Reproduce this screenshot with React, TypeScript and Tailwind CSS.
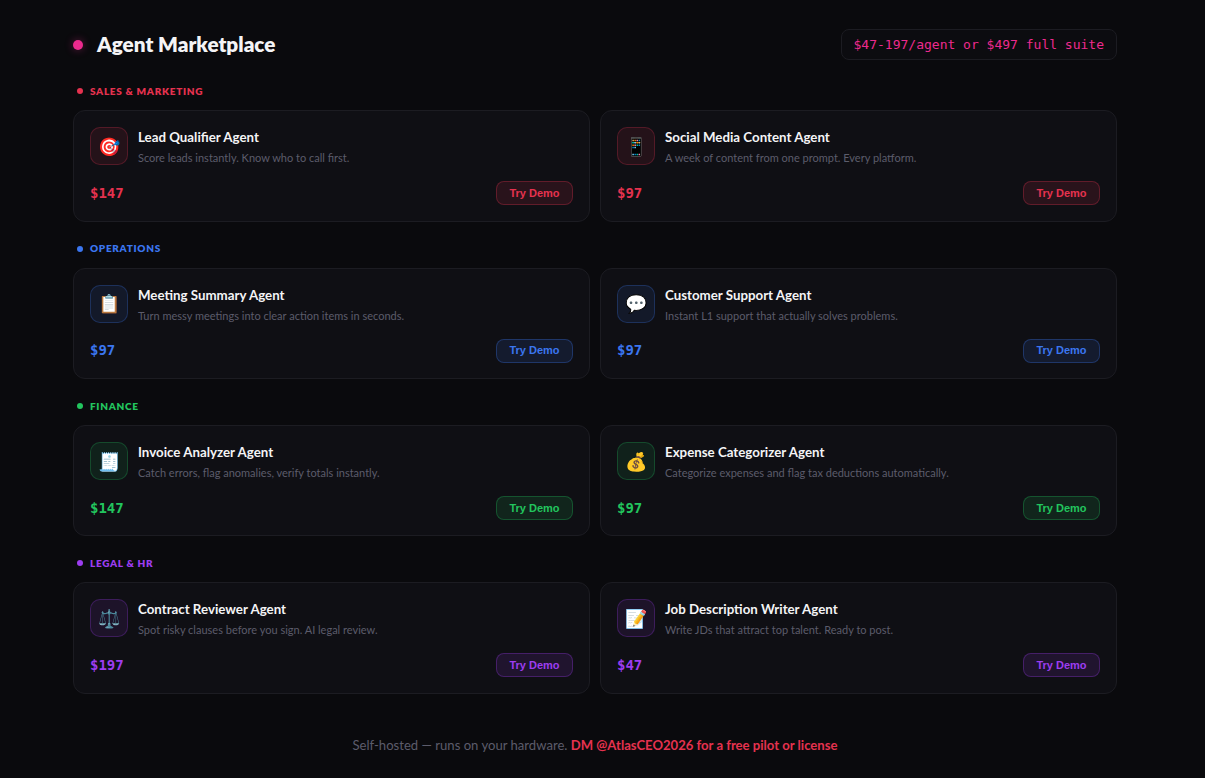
const sections = [
  {
    title: 'SALES & MARKETING',
    text: 'text-[#e5324f]',
    dot: 'bg-[#e5324f]',
    icon: 'bg-[#e5324f]/10 border-[#e5324f]/25',
    button: 'bg-[#e5324f]/12 border-[#e5324f]/30 text-[#e5324f]',
    agents: [
      { icon: '🎯', name: 'Lead Qualifier Agent', desc: 'Score leads instantly. Know who to call first.', price: '$147' },
      { icon: '📱', name: 'Social Media Content Agent', desc: 'A week of content from one prompt. Every platform.', price: '$97' },
    ],
  },
  {
    title: 'OPERATIONS',
    text: 'text-[#3b76f0]',
    dot: 'bg-[#3b76f0]',
    icon: 'bg-[#3b76f0]/10 border-[#3b76f0]/25',
    button: 'bg-[#3b76f0]/12 border-[#3b76f0]/30 text-[#3b76f0]',
    agents: [
      { icon: '📋', name: 'Meeting Summary Agent', desc: 'Turn messy meetings into clear action items in seconds.', price: '$97' },
      { icon: '💬', name: 'Customer Support Agent', desc: 'Instant L1 support that actually solves problems.', price: '$97' },
    ],
  },
  {
    title: 'FINANCE',
    text: 'text-[#22c55e]',
    dot: 'bg-[#22c55e]',
    icon: 'bg-[#22c55e]/10 border-[#22c55e]/25',
    button: 'bg-[#22c55e]/12 border-[#22c55e]/30 text-[#22c55e]',
    agents: [
      { icon: '🧾', name: 'Invoice Analyzer Agent', desc: 'Catch errors, flag anomalies, verify totals instantly.', price: '$147' },
      { icon: '💰', name: 'Expense Categorizer Agent', desc: 'Categorize expenses and flag tax deductions automatically.', price: '$97' },
    ],
  },
  {
    title: 'LEGAL & HR',
    text: 'text-[#9d3df0]',
    dot: 'bg-[#9d3df0]',
    icon: 'bg-[#9d3df0]/10 border-[#9d3df0]/25',
    button: 'bg-[#9d3df0]/12 border-[#9d3df0]/30 text-[#9d3df0]',
    agents: [
      { icon: '⚖️', name: 'Contract Reviewer Agent', desc: 'Spot risky clauses before you sign. AI legal review.', price: '$197' },
      { icon: '📝', name: 'Job Description Writer Agent', desc: 'Write JDs that attract top talent. Ready to post.', price: '$47' },
    ],
  },
]

export default function App() {
  return (
    <div className="min-h-[778px] bg-[#0a0a0d] font-['Lato','Noto_Sans',sans-serif] text-white">
      <div className="ml-[73px] w-[1044px] pt-[29px]">
        <header className="flex items-center justify-between h-[31px] mb-[4px]">
          <div className="flex items-center gap-[14px]">
            <span className="w-[10px] h-[10px] rounded-full bg-[#ec2a8e] shadow-[0_0_8px_#ec2a8e66]" />
            <h1 className="text-[20.7px] leading-[28px] font-extrabold text-[#f4f4f6] -translate-y-px">Agent Marketplace</h1>
          </div>
          <div className="flex items-center h-[31px] px-[12px] rounded-lg border border-[#1c1c22] bg-[#0c0c10] font-['DejaVu_Sans_Mono',monospace] text-[13px] text-[#ec2a8e]">
            $47-197/agent or $497 full suite
          </div>
        </header>

        {sections.map((section, i) => (
          <section key={section.title} className={i === 0 ? 'mt-[24.4px]' : 'mt-[20px]'}>
            <div className="flex items-center gap-[7px] pl-[4px] h-[14px] mb-[12px]">
              <span className={`w-[6px] h-[6px] rounded-full ${section.dot}`} />
              <span className={`text-[10px] font-extrabold tracking-[0.7px] ${section.text}`}>{section.title}</span>
            </div>
            <div className="grid grid-cols-2 gap-[10px]">
              {section.agents.map((agent) => (
                <div key={agent.name} className="h-[111.33px] rounded-xl border border-[#1c1c22] bg-[#0f0f14] pt-[16px] px-[16px]">
                  <div className="flex gap-[10px]">
                    <div className={`w-[38px] h-[38px] rounded-[10px] border flex items-center justify-center text-[18px] ${section.icon}`}>
                      {agent.icon}
                    </div>
                    <div>
                      <div className="text-[13.3px] font-bold leading-[20px] text-[#f4f4f6]">{agent.name}</div>
                      <div className="mt-[2px] text-[11px] leading-[18px] text-[#5c5c6b]">{agent.desc}</div>
                    </div>
                  </div>
                  <div className="mt-[14px] flex items-center justify-between">
                    <span className={`font-['DejaVu_Sans_Mono',monospace] text-[14px] font-semibold ${section.text}`}>{agent.price}</span>
                    <button className={`w-[77px] h-[24px] rounded-lg border font-['Liberation_Sans',sans-serif] text-[11px] font-bold ${section.button}`}>
                      Try Demo
                    </button>
                  </div>
                </div>
              ))}
            </div>
          </section>
        ))}

        <footer className="mt-[42px] text-center text-[13.1px] text-[#5c5c6b]">
          Self-hosted — runs on your hardware. <span className="font-bold text-[#e5324f]">DM @AtlasCEO2026 for a free pilot or license</span>
        </footer>
      </div>
    </div>
  )
}
